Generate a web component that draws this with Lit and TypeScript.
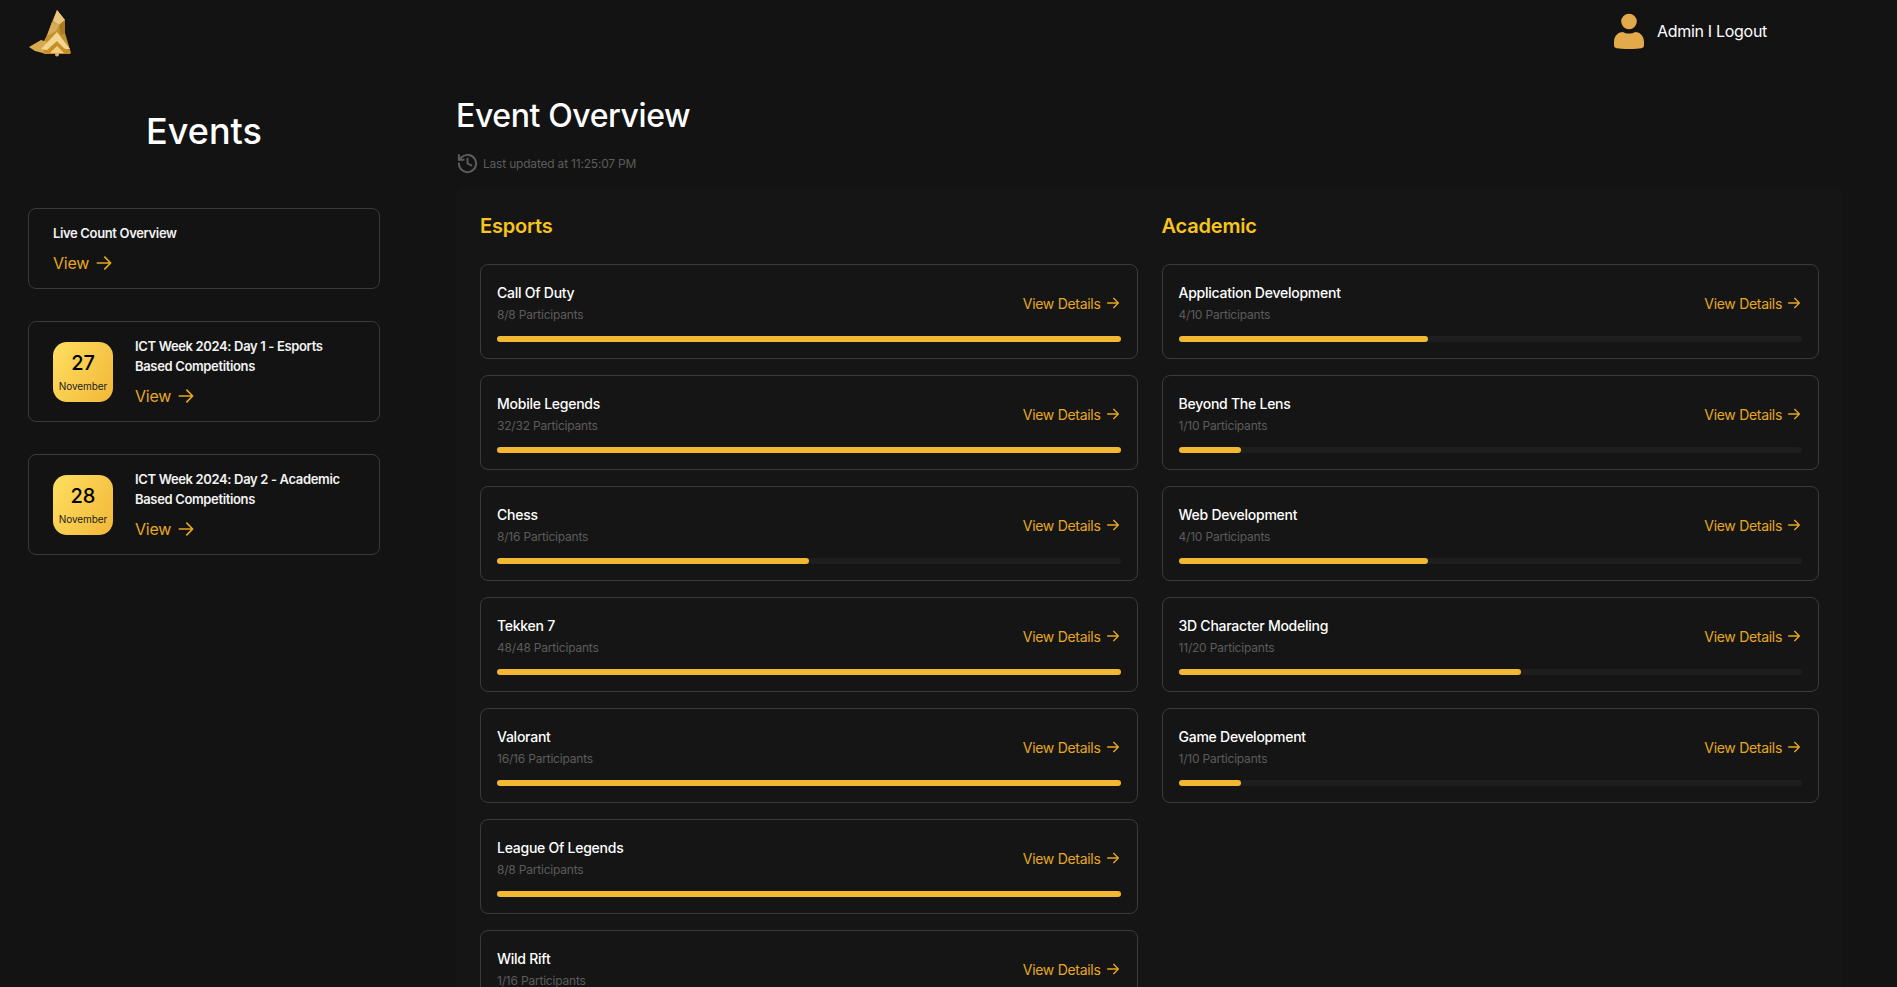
import { html, css, LitElement, svg } from "lit";
import { customElement } from "lit/decorators.js";

type Competition = { name: string; count: number; total: number };

const ESPORTS: Competition[] = [
  { name: "Call Of Duty", count: 8, total: 8 },
  { name: "Mobile Legends", count: 32, total: 32 },
  { name: "Chess", count: 8, total: 16 },
  { name: "Tekken 7", count: 48, total: 48 },
  { name: "Valorant", count: 16, total: 16 },
  { name: "League Of Legends", count: 8, total: 8 },
  { name: "Wild Rift", count: 1, total: 16 },
];

const ACADEMIC: Competition[] = [
  { name: "Application Development", count: 4, total: 10 },
  { name: "Beyond The Lens", count: 1, total: 10 },
  { name: "Web Development", count: 4, total: 10 },
  { name: "3D Character Modeling", count: 11, total: 20 },
  { name: "Game Development", count: 1, total: 10 },
];

const arrow = html`<svg class="arrow" viewBox="0 0 24 24" fill="none" stroke="currentColor" stroke-width="2" stroke-linecap="round" stroke-linejoin="round">
  <path d="M4 12h16M13 5l7 7-7 7" />
</svg>`;

const logo = html`<svg class="logo" viewBox="0 0 44 48">
  ${svg`
    <polygon points="29,1 37,11 37,24 43,44 14,44 14,36 19,26 24,13" fill="#c3902f" />
    <polygon points="29,1 37,11 31,16 25,12" fill="#e9c77e" />
    <polygon points="24,13 31,16 28,22 19,27" fill="#d9ad57" />
    <polygon points="31,16 37,11 37,24 33,26" fill="#a87a22" />
    <polygon points="1,38 13,31 19,33 15,44 7,42" fill="#d9a94f" />
    <polygon points="13,40 29,23 42,40 36,40 29,32 19,41" fill="#f3d68f" />
    <polygon points="15,45 29,33 43,45" fill="#c88f26" />
    <polygon points="22,44 29,37 36,44" fill="#f0cf85" />
    <circle cx="29" cy="45.500" r="2" fill="#e0b45e" />
  `}
</svg>`;

@customElement("app-root")
export class AppRoot extends LitElement {
  private renderCompetition(c: Competition) {
    const pct = (c.count / c.total) * 100;
    return html`
      <div class="comp">
        <div class="comp-top">
          <div>
            <div class="comp-name">${c.name}</div>
            <div class="comp-sub">${c.count}/${c.total} Participants</div>
          </div>
          <a class="details">View Details ${arrow}</a>
        </div>
        <div class="track"><div class="fill" style="width:${pct}%"></div></div>
      </div>
    `;
  }

  private renderEvent(day: string, title: string) {
    return html`
      <div class="card event">
        <div class="date">
          <span class="day">${day}</span>
          <span class="month">November</span>
        </div>
        <div>
          <div class="card-title">${title}</div>
          <a class="view">View ${arrow}</a>
        </div>
      </div>
    `;
  }

  override render() {
    return html`
      <header>
        ${logo}
        <div class="user">
          <svg class="user-icon" viewBox="0 0 32 36">
            <circle cx="16" cy="8.500" r="7.800" fill="#e3aa4c" />
            <path d="M1 29c0-7 5-10 9-10 3 2 9 2 12 0 4 0 9 3 9 10v3c0 2-1 3-3 3.300-8 1-16 1-24 0-2-.3-3-1.300-3-3.300z" fill="#e3aa4c" />
          </svg>
          <span>Admin I Logout</span>
        </div>
      </header>
      <div class="layout">
        <aside>
          <h2>Events</h2>
          <div class="card live">
            <div class="card-title">Live Count Overview</div>
            <a class="view">View ${arrow}</a>
          </div>
          ${this.renderEvent("27", "ICT Week 2024: Day 1 - Esports Based Competitions")}
          ${this.renderEvent("28", "ICT Week 2024: Day 2 - Academic Based Competitions")}
        </aside>
        <main>
          <h1>Event Overview</h1>
          <div class="updated">
            <svg viewBox="0 0 24 24" fill="none" stroke="#5c5c5c" stroke-width="2" stroke-linecap="round" stroke-linejoin="round">
              <path d="M3 12a9 9 0 1 0 2.800-6.500L3 8" />
              <path d="M3 3v5h5" />
              <path d="M12 7v5l4 2" />
            </svg>
            Last updated at 11:25:07 PM
          </div>
          <div class="panel">
            <section>
              <h3>Esports</h3>
              ${ESPORTS.map((c) => this.renderCompetition(c))}
            </section>
            <section>
              <h3>Academic</h3>
              ${ACADEMIC.map((c) => this.renderCompetition(c))}
            </section>
          </div>
        </main>
      </div>
    `;
  }

  static styles = css`
    :host {
      display: block;
      height: 100vh;
      overflow: hidden;
      background: #131313;
      color: #fff;
      font-family: Inter, "Noto Sans", sans-serif;
    }
    header {
      display: flex;
      justify-content: space-between;
      align-items: flex-start;
      height: 64px;
      padding: 9px 130px 0 28px;
      box-sizing: border-box;
    }
    .logo { width: 44px; height: 48px; }
    .user {
      display: flex;
      align-items: center;
      gap: 12px;
      margin-top: 4px;
      font-size: 16px;
      letter-spacing: -0.3px;
    }
    .user-icon { width: 32px; height: 36px; }
    .layout {
      display: grid;
      grid-template-columns: 352px 1fr;
      gap: 76px;
      padding: 0 54px 0 28px;
    }
    aside h2 {
      margin: 47px 0 57px;
      font-size: 36px;
      line-height: 40px;
      font-weight: 500;
      text-align: center;
    }
    .card {
      box-sizing: border-box;
      border: 1px solid #3a3a3a;
      border-radius: 8px;
      margin-bottom: 32px;
      padding: 14px 24px;
    }
    .live { height: 81px; }
    .event {
      display: flex;
      gap: 22px;
      height: 101px;
      padding: 0 24px;
      align-items: center;
    }
    .card-title {
      font-size: 13px;
      line-height: 20px;
      font-weight: 600;
      letter-spacing: -0.35px;
      color: #f2f2f2;
    }
    .view {
      display: flex;
      align-items: center;
      gap: 5px;
      margin-top: 8px;
      font-size: 16px;
      line-height: 24px;
      letter-spacing: -0.2px;
      color: #e5a823;
    }
    .view .arrow { width: 20px; height: 20px; }
    .date {
      flex: none;
      display: flex;
      flex-direction: column;
      align-items: center;
      justify-content: center;
      width: 60px;
      height: 60px;
      border-radius: 14px;
      background: linear-gradient(120deg, #ffdf60, #f2b739);
      color: #000;
    }
    .day { font-size: 20px; line-height: 26px; font-weight: 500; }
    .month { margin-top: 3px; font-size: 10px; line-height: 14px; letter-spacing: -0.1px; color: #1c1c1c; }
    h1 {
      margin: 30px 0 0;
      font-size: 32px;
      line-height: 44px;
      font-weight: 500;
      letter-spacing: -0.4px;
    }
    .updated {
      display: flex;
      align-items: center;
      gap: 4px;
      margin: 15px 0 0;
      height: 20px;
      font-size: 12px;
      letter-spacing: -0.2px;
      color: #5c5c5c;
    }
    .updated svg { width: 23px; height: 23px; flex: none; }
    .panel {
      display: grid;
      grid-template-columns: 1fr 1fr;
      gap: 24px;
      margin-top: 15px;
      padding: 24px;
      background: #151515;
      border-radius: 8px;
    }
    h3 {
      margin: 0 0 24px;
      height: 28px;
      font-size: 20px;
      line-height: 28px;
      font-weight: 600;
      letter-spacing: -0.2px;
      color: #f8c51c;
    }
    .comp {
      box-sizing: border-box;
      height: 95px;
      margin-bottom: 16px;
      padding: 15px 16px 0;
      border: 1px solid #3a3a3a;
      border-radius: 8px;
    }
    .comp-top {
      display: flex;
      justify-content: space-between;
      align-items: center;
      height: 47px;
    }
    .comp-name {
      font-size: 14px;
      line-height: 20px;
      font-weight: 500;
      letter-spacing: -0.25px;
    }
    .comp-sub {
      margin-top: 3px;
      font-size: 12px;
      line-height: 18px;
      letter-spacing: -0.2px;
      color: #5c5c5c;
    }
    .details {
      display: flex;
      align-items: center;
      gap: 4px;
      margin-top: -1px;
      font-size: 14px;
      letter-spacing: -0.3px;
      color: #e5a823;
    }
    .details .arrow { width: 16px; height: 16px; }
    .track {
      height: 6px;
      margin-top: 9px;
      border-radius: 3px;
      background: #1e1e1e;
    }
    .fill { height: 100%; border-radius: 3px; background: #f3b832; }
  `;
}
